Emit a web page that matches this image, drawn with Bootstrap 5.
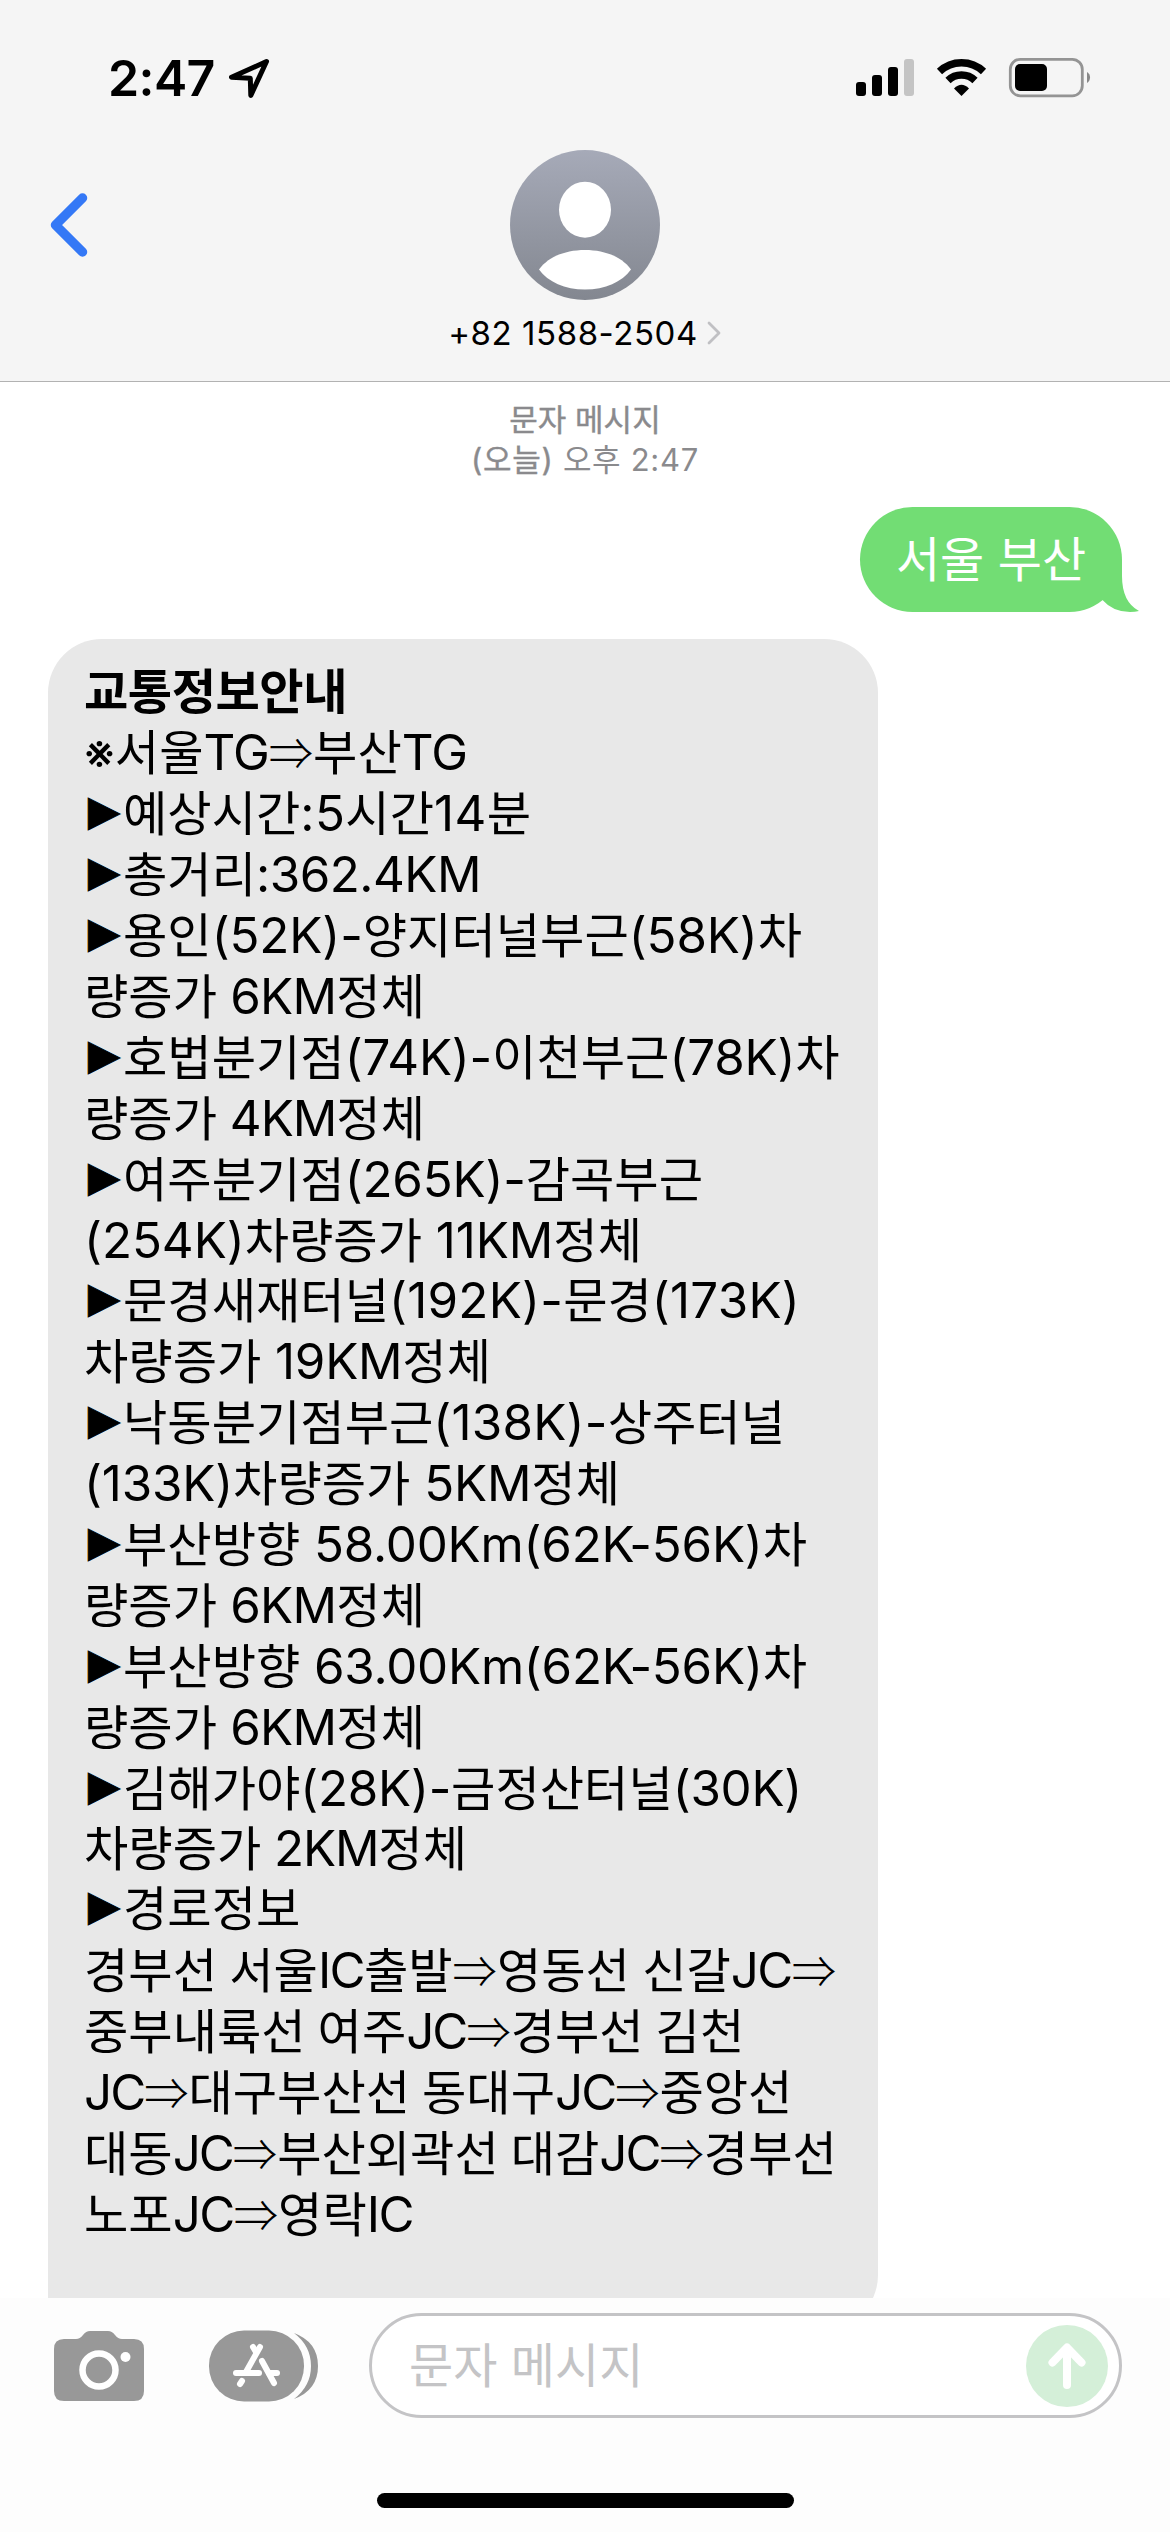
<!DOCTYPE html>
<html lang="ko">
<head>
<meta charset="utf-8">
<meta name="viewport" content="width=device-width, initial-scale=1">
<title>메시지</title>
<link rel="stylesheet" href="https://cdn.jsdelivr.net/npm/bootstrap@5.3.0/dist/css/bootstrap.min.css">
<style>
html,body{height:2532px;overflow:hidden}
body{font-family:Inter,"Noto Sans CJK KR",sans-serif;color:#000;background:#fff}
svg{display:block;flex:none}
.phone{width:1170px;height:2532px}
.topbar{height:382px;background:#f5f5f5;border-bottom:1.5px solid #b2b2b2}
.status{height:150px;padding:50px 78px 0 108px}
.clock{font-size:50px;font-weight:600;line-height:56px;width:118px;letter-spacing:-.6px}
.contact{height:231px}
.back{padding:43px 0 0 50px;width:150px}
.side{width:150px}
.phone-no{font-size:33px;line-height:40px;margin-top:13px;letter-spacing:.55px}
.stamp{font-size:31px;line-height:40px;color:#8a8a8d;padding-top:18px;height:125px}
.stamp b{font-weight:400;-webkit-text-stroke:.4px #8a8a8d}
.stamp .when{letter-spacing:.7px}
.thread{height:1916px}
.sent{width:262px;height:105px;border-radius:52.5px;background:#72dd74;color:#fff;font-size:48px;margin-right:48px}
.tail{right:-17px;bottom:0}
.recv{width:830px;height:1690px;margin:27px 0 0 48px;border-radius:54px 54px 54px 0;background:#e8e8e8;padding:22.5px 0 0 36px}
.ln{height:60.9px;line-height:60.9px;font-size:48.2px;white-space:nowrap}
.lat{font-size:49.3px;font-style:normal}
.arr{display:inline-block;width:44.3px;text-align:center;font-family:"Noto Sans CJK KR",sans-serif;font-size:44.3px;font-weight:300;font-style:normal;line-height:1}
.tri{display:inline-block;width:39px;height:20px;padding-left:4px;font-family:"DejaVu Sans",sans-serif;font-size:42px;font-style:normal;line-height:20px;vertical-align:6px;-webkit-text-stroke:.8px #000}
.compose{height:234px;background:#fdfdfd}
.field{width:753px;height:105px;border:3px solid #c4c4c6;border-radius:53px;padding:0 11px 0 37px;margin-left:50px;color:#c4c4c6;font-size:48px;background:#fff}
.apps{margin-left:65px}
.tools{padding:15px 0 0 54px}
.home{width:417px;height:15px;border-radius:8px;background:#000;margin:75px auto 0 377px}
</style>
</head>
<body>
<div class="phone d-flex flex-column overflow-hidden">
<header class="topbar flex-shrink-0">
 <div class="status d-flex align-items-start">
  <div class="clock">2:47</div>
  <svg class="mt-2" width="44" height="42" viewBox="226 58 44 42"><path d="M266.500 61.500 L231.500 77.300 L250.300 78.300 L250.800 95.500 Z" fill="none" stroke="#000" stroke-width="5" stroke-linejoin="round"/></svg>
  <svg class="ms-auto mt-1" width="240" height="46" viewBox="852 54 240 46">
   <rect x="856" y="82" width="10" height="14" rx="3"/><rect x="872" y="75" width="10" height="21" rx="3"/><rect x="888" y="67" width="10" height="29" rx="3"/><rect x="904" y="59" width="10" height="37" rx="3" fill="#c4c4c4"/>
   <path d="M939.500 71.500 A32 32 0 0 1 983.500 71.500" fill="none" stroke="#000" stroke-width="7.500"/>
   <path d="M948 80.500 A19.500 19.500 0 0 1 975 80.500" fill="none" stroke="#000" stroke-width="7.500"/>
   <path d="M954 88.500 Q961.500 81 969 88.500 L961.500 96 Z"/>
   <rect x="1010.300" y="59.300" width="72" height="36.500" rx="10" fill="none" stroke="#949494" stroke-width="2.800"/>
   <rect x="1015" y="64" width="32" height="27" rx="5"/><path d="M1087 72 A6.500 6.500 0 0 1 1087 83 Z" fill="#888"/>
  </svg>
 </div>
 <div class="contact d-flex justify-content-between">
  <div class="back"><svg width="38" height="64" viewBox="0 0 38 64"><path d="M32.500 5 L5.500 32 L32.500 59" fill="none" stroke="#3478f6" stroke-width="9.500" stroke-linecap="round" stroke-linejoin="round"/></svg></div>
  <div class="d-flex flex-column align-items-center">
   <svg width="150" height="150" viewBox="0 0 150 150"><defs><linearGradient id="g" x1="0" y1="0" x2="0" y2="1"><stop stop-color="#a6aab8"/><stop offset="1" stop-color="#838790"/></linearGradient></defs><circle cx="75" cy="75" r="75" fill="url(#g)"/><ellipse cx="75" cy="59.700" rx="26" ry="28" fill="#fff"/><path d="M29 119.500 C38 107 55 100 75 100 C95 100 112 107 121 119.500 C112 132 95 139.500 75 139.500 C55 139.500 38 132 29 119.500Z" fill="#fff"/></svg>
   <div class="phone-no d-flex align-items-center"><span>+82 1588-2504</span><svg class="ms-2" width="16" height="26" viewBox="0 0 16 26"><path d="M3 3 L13 13 L3 23" fill="none" stroke="#c0c0c3" stroke-width="2.800" stroke-linecap="round" stroke-linejoin="round"/></svg></div>
  </div>
  <div class="side"></div>
 </div>
</header>
<main class="thread flex-shrink-0 overflow-hidden">
 <div class="stamp text-center"><div><b>문자 메시지</b></div><div class="when"><b>(오늘)</b> 오후 2:47</div></div>
 <div class="sent position-relative ms-auto d-flex align-items-center justify-content-center"><span>서울 부산</span>
  <svg class="tail position-absolute" width="56" height="52" viewBox="0 0 56 52"><path d="M5 40 H19.500 Q30 52 47 52 Q52 52 56 51 Q39 42 39 16 V0 H5Z" fill="#72dd74"/></svg></div>
 <div class="recv">
<div class="ln fw-bold" data-end="347">교통정보안내</div>
<div class="ln" data-end="467">※서울TG⇒부산TG</div>
<div class="ln" data-end="531">▶예상시간:5시간14분</div>
<div class="ln" data-end="481">▶총거리:362.4KM</div>
<div class="ln" data-end="802">▶용인(52K)-양지터널부근(58K)차</div>
<div class="ln" data-end="425">량증가 6KM정체</div>
<div class="ln" data-end="839.5">▶호법분기점(74K)-이천부근(78K)차</div>
<div class="ln" data-end="425">량증가 4KM정체</div>
<div class="ln" data-end="703">▶여주분기점(265K)-감곡부근</div>
<div class="ln" data-end="642">(254K)차량증가 11KM정체</div>
<div class="ln" data-end="800">▶문경새재터널(192K)-문경(173K)</div>
<div class="ln" data-end="491">차량증가 19KM정체</div>
<div class="ln" data-end="785">▶낙동분기점부근(138K)-상주터널</div>
<div class="ln" data-end="620">(133K)차량증가 5KM정체</div>
<div class="ln" data-end="807">▶부산방향 58.00Km(62K-56K)차</div>
<div class="ln" data-end="425">량증가 6KM정체</div>
<div class="ln" data-end="807">▶부산방향 63.00Km(62K-56K)차</div>
<div class="ln" data-end="425">량증가 6KM정체</div>
<div class="ln" data-end="802">▶김해가야(28K)-금정산터널(30K)</div>
<div class="ln" data-end="467">차량증가 2KM정체</div>
<div class="ln" data-end="299.5">▶경로정보</div>
<div class="ln" data-end="836">경부선 서울IC출발⇒영동선 신갈JC⇒</div>
<div class="ln" data-end="743">중부내륙선 여주JC⇒경부선 김천</div>
<div class="ln" data-end="790">JC⇒대구부산선 동대구JC⇒중앙선</div>
<div class="ln" data-end="835">대동JC⇒부산외곽선 대감JC⇒경부선</div>
<div class="ln" data-end="413">노포JC⇒영락IC</div>
 </div>
</main>
<footer class="compose flex-shrink-0">
 <div class="tools d-flex align-items-center">
  <svg width="90" height="72" viewBox="0 0 90 72"><path d="M10 9 H22 Q26 9 29 5 Q32 1 36 1 H54 Q58 1 61 5 Q64 9 68 9 H80 Q90 9 90 19 V61 Q90 71 80 71 H10 Q0 71 0 61 V19 Q0 9 10 9Z" fill="#989898"/><circle cx="45" cy="40" r="16.500" fill="none" stroke="#fff" stroke-width="6.500"/><circle cx="71.500" cy="27" r="5" fill="#fff"/></svg>
  <svg class="apps" width="110" height="72" viewBox="0 0 110 72"><rect x="0" y="0.500" width="95" height="71" rx="35" fill="#989898"/><path d="M85 3 Q109 12 109 36 Q109 60 85 69 Q102 56 102 36 Q102 16 85 3Z" fill="#989898"/><g stroke="#fff" stroke-width="6" stroke-linecap="round" fill="none"><path d="M51 17 L37 42"/><path d="M44 17 L47 22"/><path d="M53 31 L65 53"/><path d="M27 43 H50"/><path d="M60 43 H68"/><path d="M33 51 L31 54"/></g></svg>
  <div class="field d-flex align-items-center justify-content-between"><span>문자 메시지</span><svg width="82" height="82" viewBox="0 0 82 82"><circle cx="41" cy="41" r="41" fill="#d4efd8"/><path d="M41 60 V23 M26.500 37.500 L41 22.500 L55.500 37.500" fill="none" stroke="#fff" stroke-width="8" stroke-linecap="round" stroke-linejoin="round"/></svg></div>
 </div>
 <div class="home"></div>
</footer>
</div>
<script src="https://cdn.jsdelivr.net/npm/bootstrap@5.3.0/dist/js/bootstrap.bundle.min.js"></script>
<script>
// Sets Latin runs and symbols in their own faces, then spaces each line out to its measure.
document.querySelectorAll('.ln').forEach(function(el){
  el.innerHTML='<span>'+el.textContent
    .replace(/[A-Za-z0-9().:\- ]+/g,'<i class="lat">$&</i>')
    .replace(/⇒/g,'<i class="arr">⇒</i>').replace(/▶/g,'<i class="tri">▶</i>')+'</span>';
  var line=el.firstChild, box=line.getBoundingClientRect();
  var runs=[].slice.call(line.querySelectorAll('.lat'));
  if(!runs.length&&!line.querySelector('.tri')) runs=[line];
  var n=runs.reduce(function(s,r){return s+r.textContent.length},0);
  if(!n) return;
  var gap=Math.max(-2,Math.min(2,(el.dataset.end-box.right)/n));
  runs.forEach(function(r){r.style.letterSpacing=gap.toFixed(3)+'px'});
});
</script>
</body>
</html>
